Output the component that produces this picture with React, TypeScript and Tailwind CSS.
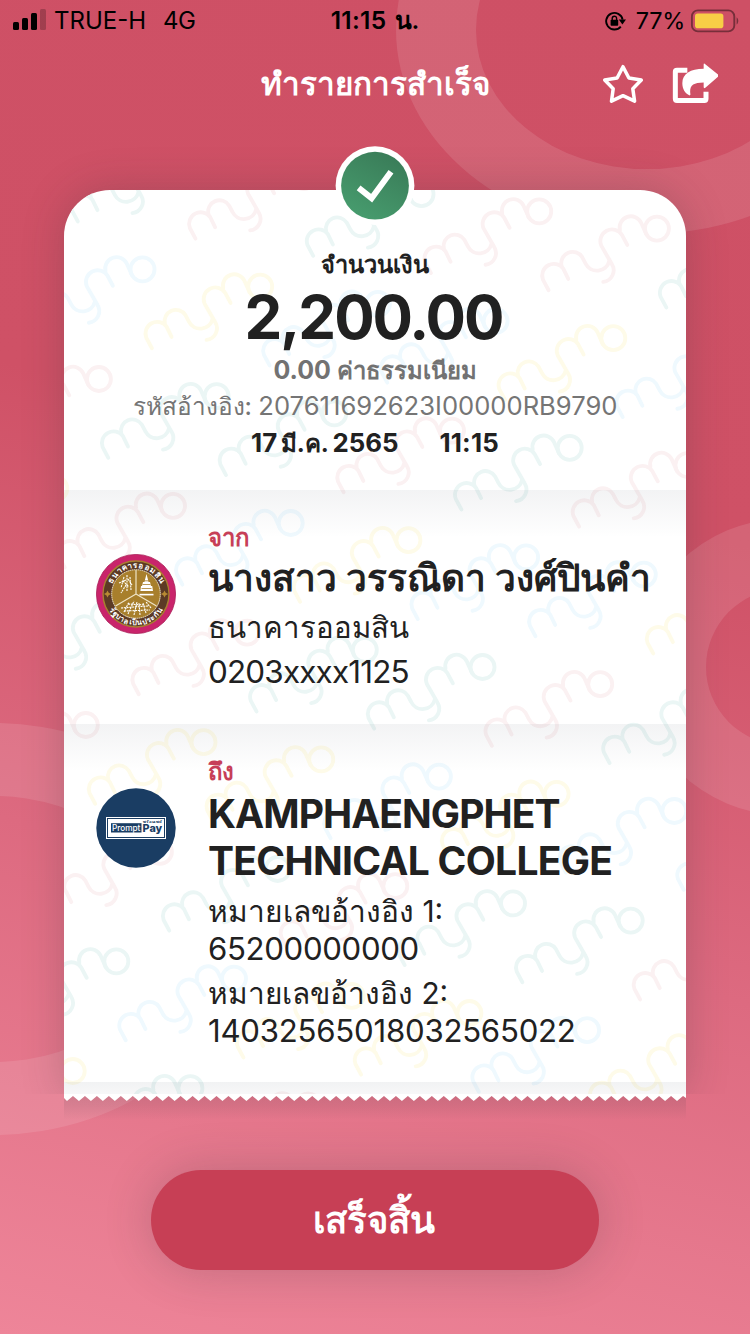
import type { ReactNode } from "react";

const TEAL = "#ebf6f5";
const PINK = "#fbf1f2";
const BLUE = "#eff9fe";
const YELLOW = "#fefbe9";

type Mark = { row: number; col: number; color: string };

const MARK_ROWS: { start: number; colors: string[] }[] = [
  { start: -1, colors: [TEAL, PINK, TEAL, PINK, PINK, TEAL] },
  { start: -1, colors: [BLUE, YELLOW, BLUE, BLUE, YELLOW, BLUE] },
  { start: -1, colors: [PINK, TEAL, TEAL, PINK, TEAL, PINK] },
  { start: -1, colors: [YELLOW, PINK, BLUE, YELLOW, BLUE, BLUE, YELLOW] },
  { start: 0, colors: [TEAL, PINK, TEAL, TEAL, PINK, TEAL] },
  { start: 0, colors: [PINK, YELLOW, YELLOW, BLUE, YELLOW, BLUE, BLUE] },
  { start: 1, colors: [PINK, TEAL, PINK, TEAL, TEAL, PINK] },
  { start: 1, colors: [TEAL, BLUE, YELLOW, YELLOW, BLUE, YELLOW] },
  { start: 1, colors: [YELLOW, TEAL, PINK] },
];

const MARKS: Mark[] = MARK_ROWS.flatMap(({ start, colors }, row) =>
  colors.map((color, i) => ({ row, col: start + i, color }))
);

function Watermark() {
  return (
    <svg className="absolute inset-0" width="622" height="904" viewBox="64 190 622 904" fill="none">
      <defs>
        <g id="mymo" transform="scale(0.3333) translate(-48 -261)" strokeWidth="11.5" strokeLinecap="round" strokeLinejoin="round">
          <path d="M48 260 L31 228 A35 35 0 0 1 92 195 L107 226" />
          <path d="M87 187 A34 34 0 0 1 149 161 L159 180 A38 38 0 0 0 230 172" />
          <path d="M284 124 L268 94 A35 35 0 0 0 206 126 L238 182 A35 35 0 0 1 212 235" />
          <path d="M262 80 A34 34 0 0 1 326 58 L341 92" />
          <circle cx="373" cy="75" r="36" />
        </g>
      </defs>
      {MARKS.map(({ row, col, color }) => (
        <use
          key={`${row}:${col}`}
          href="#mymo"
          stroke={color}
          x={195.5 - 43.6 * row + 117.7 * col}
          y={239 + 109.6 * row + 17.2 * col}
        />
      ))}
    </svg>
  );
}

function Rings() {
  return (
    <svg className="absolute inset-0" width="750" height="1334" viewBox="0 0 750 1334" fill="#fff" fillOpacity="0.11" fillRule="evenodd">
      <path d="M396 30 a251 204 0 1 0 502 0 a251 204 0 1 0 -502 0 Z M476 30 a171 139 0 1 0 342 0 a171 139 0 1 0 -342 0 Z" />
      <path d="M636 667 a148 148 0 1 0 296 0 a148 148 0 1 0 -296 0 Z M706 667 a78 78 0 1 0 156 0 a78 78 0 1 0 -156 0 Z" />
      <path d="M-258 929 a251 206 0 1 0 502 0 a251 206 0 1 0 -502 0 Z M-178 929 a171 133 0 1 0 342 0 a171 133 0 1 0 -342 0 Z" />
    </svg>
  );
}

function StatusBar() {
  return (
    <div className="relative grid h-[41px] grid-cols-[1fr_auto_1fr] items-center whitespace-nowrap text-black">
      <div className="flex items-center pl-[13px]">
        <svg width="33" height="21" viewBox="0 0 33 21" className="mt-[-2px]">
          <rect x="0" y="13" width="6" height="8" rx="1.5" />
          <rect x="9" y="9" width="6" height="12" rx="1.5" />
          <rect x="18" y="4" width="6" height="17" rx="1.5" />
          <rect x="27" y="0" width="6" height="21" rx="1.5" opacity="0.22" />
        </svg>
        <span className="ml-[8px] text-[24px] leading-[41px]">TRUE-H</span>
        <span className="ml-[17px] text-[24px] leading-[41px] tracking-[-0.5px]">4G</span>
      </div>
      <div className="flex gap-[8px] text-[24.5px] leading-[41px] font-semibold">
        <span className="tracking-[0.3px]">11:15</span>
        <span>น.</span>
      </div>
      <div className="flex items-center justify-end pr-[11px]">
        <svg width="22" height="20" viewBox="0 0 22 20" fill="none">
          <path d="M15.8 15.6 A8.3 8.3 0 1 1 17.6 8.6" stroke="#000" strokeWidth="1.9" />
          <path d="M13.8 8.6 h7.2 l-3.6 5 Z" fill="#000" />
          <rect x="5.6" y="8.8" width="7.6" height="6" rx="0.8" fill="#000" />
          <path d="M7.2 9.2 V7.4 a2.2 2.2 0 0 1 4.4 0 V9.2" stroke="#000" strokeWidth="1.4" />
        </svg>
        <span className="ml-[9px] text-[23.5px] leading-[41px] tracking-[-0.3px]">77%</span>
        <svg width="49" height="24" viewBox="0 0 49 24" fill="none" className="ml-[5px]">
          <rect x="1.9" y="1.4" width="42.4" height="21" rx="6" stroke="#000" strokeOpacity="0.42" strokeWidth="1.9" />
          <rect x="5" y="4.6" width="28.4" height="14.6" rx="2.8" fill="#f8ce46" />
          <path d="M46.6 8.2 C48.8 9.6 48.8 14.2 46.6 15.6 Z" fill="#000" fillOpacity="0.42" />
        </svg>
      </div>
    </div>
  );
}

function Header() {
  return (
    <div className="relative grid h-[86px] grid-cols-[1fr_auto_1fr] items-center text-white">
      <span />
      <h1 className="whitespace-nowrap text-[31.4px] leading-[86px] font-bold">ทำรายการสำเร็จ</h1>
      <div className="flex items-center justify-end gap-[28px] pr-[32px]">
        <svg width="42" height="42" viewBox="0 0.5 42 42" fill="none">
          <path
            d="M21 4.2 L26.9 15.5 L39.3 17.6 L30.8 26.2 L32.6 38.7 L21 33.2 L9.5 38.7 L11.2 26.2 L2.7 17.6 L15.1 15.5 Z"
            stroke="#fff"
            strokeWidth="3.5"
            strokeLinejoin="round"
          />
        </svg>
        <svg width="46" height="42" viewBox="890 188.5 138 126" fill="none">
          <path d="M936 210 H905 Q900 210 900 215 V296 Q900 301 905 301 H987 Q992 301 992 296 V275" stroke="#fff" strokeWidth="15" />
          <path
            d="M988 191 Q985 188 985 194 V206 C945 206 921 221 921 249 C921 266 929 279 943 286 C944 286 946 284 945 281 C942 257 952 247 985 247 V260 Q985 267 990 263 L1028 230 Q1031 226 1028 223 Z"
            fill="#fff"
          />
        </svg>
      </div>
    </div>
  );
}

function SuccessBadge() {
  return (
    <svg className="absolute top-[-44px] left-[271px]" width="80" height="80" viewBox="0 0 80 80" fill="none">
      <defs>
        <linearGradient id="badge" x1="0.8" y1="0.1" x2="0.3" y2="1">
          <stop offset="0" stopColor="#3a7d59" />
          <stop offset="1" stopColor="#479c6e" />
        </linearGradient>
      </defs>
      <circle cx="40" cy="39.7" r="39.4" fill="#fff" />
      <circle cx="40" cy="39.7" r="33.9" fill="url(#badge)" />
      <path d="M23.6 41.8 L36.6 52.2 L56 25.8" stroke="#fff" strokeWidth="6" />
    </svg>
  );
}

function BankLogo() {
  return (
    <svg width="80" height="80" viewBox="-40 -40 80 80" fill="none" className="shrink-0">
      <defs>
        <path id="arcTop" d="M-26 0 A26 26 0 0 1 26 0" />
        <path id="arcBottom" d="M-31.2 0 A31.2 31.2 0 0 0 31.2 0" />
      </defs>
      <circle r="39.6" fill="#c9246b" stroke="#a91f58" strokeWidth="0.8" />
      <circle r="33" fill="#5c3a25" stroke="#a8802f" strokeWidth="1.4" />
      <circle r="24.3" fill="#a87f2c" stroke="#f3ead3" strokeWidth="1" strokeDasharray="1.6 0.5" />
      <path d="M0 0 V-24 M0 0 L-20.5 12 M0 0 L20.5 12" stroke="#efe4c6" strokeWidth="1.2" />
      <g stroke="#fff" strokeWidth="1.1" strokeDasharray="2 0.8">
        <path d="M-9 -19 V-3 M-12 -17 L-15 -6 M-6 -17 L-5 -4 M-10 -14 L-17 -11 M-10 -9 L-15 -1 M-13 -13 L-7 -7 M-8 -15 L-4 -9" />
        <path d="M-12 18 L-7 8 M-8 20 L-2 7 M-2 21 L1 8 M4 21 L3 9 M10 19 L7 9 M-15 14 L12 12 M-12 17 L14 16 M-8 10 L9 11 M15 14 L10 8" />
      </g>
      <path d="M10.5 -20 L8.4 -12 H7 L6 -8 H5 L4.4 -3 H17 L16.2 -8 H15 L14 -12 H12.6 Z" fill="#fff" />
      <path d="M6.5 -9.5 H14.5 M5.5 -5.5 H15.5 M8 -13.2 H13" stroke="#a87f2c" strokeWidth="0.8" />
      <path d="M3.5 0.6 H17.5" stroke="#fff" strokeWidth="1.6" />
      <g fill="#b88a33">
        <path d="M-28.5 -3.6 l1.2 2.4 l2.4 1.2 l-2.4 1.2 l-1.2 2.4 l-1.2 -2.4 l-2.4 -1.2 l2.4 -1.2 Z" />
        <path d="M28.5 -3.6 l1.2 2.4 l2.4 1.2 l-2.4 1.2 l-1.2 2.4 l-1.2 -2.4 l-2.4 -1.2 l2.4 -1.2 Z" />
      </g>
      <g className="text-[8px] font-bold" fill="#fff">
        <text textAnchor="middle">
          <textPath href="#arcTop" startOffset="50%" textLength="60">ธนาคารออมสิน</textPath>
        </text>
        <text textAnchor="middle" className="text-[7.5px]">
          <textPath href="#arcBottom" startOffset="50%" textLength="64">รัฐบาลเป็นประกัน</textPath>
        </text>
      </g>
    </svg>
  );
}

function PromptPayLogo() {
  return (
    <svg width="80" height="80" viewBox="0 0 80 80" className="shrink-0">
      <circle cx="40" cy="40" r="39.7" fill="#1a3d63" />
      <rect x="10" y="29" width="60" height="22" fill="#fff" />
      <rect x="11.5" y="30.5" width="57" height="19" fill="none" stroke="#1a3d63" strokeWidth="1" />
      <rect x="15" y="35.2" width="30.5" height="9.3" fill="#1a3d63" />
      <text x="16" y="42.6" fontSize="8.8" fontWeight="500" textLength="28.4" lengthAdjust="spacingAndGlyphs" fill="#fff">Prompt</text>
      <text x="46.6" y="44" fontSize="10.4" fontWeight="800" textLength="19.6" lengthAdjust="spacingAndGlyphs" fill="#1a3d63">Pay</text>
      <text x="47" y="34.6" fontSize="3.2" fontWeight="700" textLength="18.5" lengthAdjust="spacingAndGlyphs" fill="#1a3d63">พร้อมเพย์</text>
    </svg>
  );
}

function Section({ logo, label, children }: { logo: ReactNode; label: string; children: ReactNode }) {
  return (
    <section className="flex bg-linear-to-b from-[#1e283c]/[0.055] to-transparent bg-[length:100%_48px] bg-no-repeat pt-[33px] pl-[32px]">
      <div className="mt-[31px] h-[80px] w-[112px] shrink-0">{logo}</div>
      <div className="flex flex-col whitespace-nowrap">
        <span className="text-[23.9px] leading-[30px] font-semibold text-[#c73f58]">{label}</span>
        {children}
      </div>
    </section>
  );
}

const TEETH = 52;
const PITCH = 622 / TEETH;
const zigzag =
  "M0 0 H622 V4 " +
  Array.from({ length: TEETH }, (_, i) => {
    const right = 622 - i * PITCH;
    return `L${(right - PITCH * 0.25).toFixed(2)} 2 L${(right - PITCH * 0.75).toFixed(2)} 7`;
  }).join(" ") +
  " L0 4 Z";

function TornEdge() {
  return (
    <svg width="622" height="30" viewBox="0 0 622 30" className="relative block">
      <defs>
        <linearGradient id="edge" x1="0" y1="0" x2="0" y2="1">
          <stop offset="0" stopColor="#5a4650" stopOpacity="0.17" />
          <stop offset="0.4" stopColor="#5a4650" stopOpacity="0.12" />
          <stop offset="1" stopColor="#5a4650" stopOpacity="0" />
        </linearGradient>
      </defs>
      <rect y="1" width="622" height="25" fill="url(#edge)" />
      <path d={zigzag} fill="#fff" />
    </svg>
  );
}

export default function App() {
  return (
    <div className="relative flex h-[1334px] w-[750px] flex-col overflow-hidden bg-[linear-gradient(194deg,#ce5065_0%,#cf5166_36%,#dd6a80_66%,#ee8599_100%)] font-['Inter',sans-serif] text-[#212121]">
      <Rings />
      <StatusBar />
      <Header />

      <main className="relative mx-[64px] mt-[63px]">
        <div className="[clip-path:inset(-80px_-64px_0_-64px)]">
          <div className="relative h-[904px] rounded-t-[46px] bg-white shadow-[0_0_40px_rgba(60,50,60,0.25)]">
            <div className="absolute inset-0 overflow-hidden rounded-t-[46px]">
              <Watermark />
            </div>
            <div className="relative flex h-full flex-col">
              <section className="flex h-[300px] flex-col items-center pt-[60px] whitespace-nowrap">
                <span className="text-[23.6px] leading-[30px] font-semibold">จำนวนเงิน</span>
                <span className="mr-[3px] text-[60px] leading-[75px] font-bold tracking-[-2px]">2,200.00</span>
                <span className="text-[23.8px] leading-[31px] font-bold text-[#727272]">
                  <span className="text-[25px]">0.00</span> ค่าธรรมเนียม
                </span>
                <span className="text-[25.6px] leading-[40px] text-[#757575]">
                  <span className="text-[24.3px] font-medium">รหัสอ้างอิง: </span>207611692623I00000RB9790
                </span>
                <div className="flex gap-[41px] text-[25.8px] leading-[33px] font-bold">
                  <span className="[word-spacing:-2.5px]">
                    17 <span className="text-[24px]">มี.ค.</span> 2565
                  </span>
                  <span className="tracking-[0.2px]">11:15</span>
                </div>
              </section>

              <div className="h-[234px]">
                <Section logo={<BankLogo />} label="จาก">
                  <span className="text-[37px] leading-[50px] font-bold">นางสาว วรรณิดา วงศ์ปินคำ</span>
                  <span className="text-[29.4px] leading-[50px]">ธนาคารออมสิน</span>
                  <span className="text-[31.4px] leading-[38px] tracking-[-0.8px]">0203xxxx1125</span>
                </Section>
              </div>

              <div className="h-[358px]">
                <Section logo={<PromptPayLogo />} label="ถึง">
                  <span className="mt-[3px] text-[39px] leading-[47px] font-bold tracking-[-0.95px]">KAMPHAENGPHET</span>
                  <span className="text-[39px] leading-[47px] font-bold tracking-[-0.7px]">TECHNICAL COLLEGE</span>
                  <span className="mt-[9px] text-[29.9px] leading-[37px]">หมายเลขอ้างอิง 1:</span>
                  <span className="text-[31.2px] leading-[39px] tracking-[-0.35px]">65200000000</span>
                  <span className="text-[29.8px] leading-[48px]">หมายเลขอ้างอิง 2:</span>
                  <span className="text-[31.2px] leading-[28px] tracking-[-0.25px]">14032565018032565022</span>
                </Section>
              </div>

              <div className="h-[12px] bg-linear-to-b from-[#1e283c]/[0.06] to-[#1e283c]/[0.035]" />
            </div>
          </div>
        </div>
        <TornEdge />
        <SuccessBadge />
      </main>

      <button className="relative mx-auto mt-[46px] h-[100px] w-[448px] rounded-full bg-[#c73f55] pr-[2px] text-[36.5px] leading-[100px] font-bold text-white shadow-[0_0_48px_rgba(60,50,60,0.24)]">
        เสร็จสิ้น
      </button>
    </div>
  );
}
